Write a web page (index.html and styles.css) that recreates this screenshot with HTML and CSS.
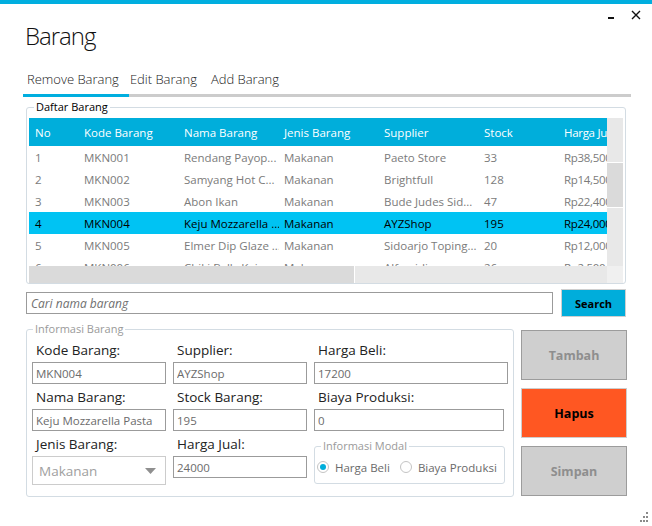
FILE: index.html
```html
<!DOCTYPE html>
<html lang="id">
<head>
<meta charset="utf-8">
<title>Barang</title>
<link rel="stylesheet" href="styles.css">
</head>
<body>
<div class="topbar"></div>
<header class="titlebar">
  <h1 class="title">Barang</h1>
  <div class="controls">
    <span class="min"></span>
    <svg class="close" width="10" height="10" viewBox="0 0 10 10"><path d="M1 1L9 9M9 1L1 9" stroke="#111" stroke-width="1.4" fill="none"/></svg>
  </div>
</header>
<nav class="tabs">
  <span class="tab">Remove Barang</span>
  <span class="tab">Edit Barang</span>
  <span class="tab">Add Barang</span>
</nav>
<div class="tabline"><div class="tabline-active"></div></div>

<fieldset class="group list">
  <legend>Daftar Barang</legend>
  <div class="grid">
    <div class="grid-main">
      <div class="viewport">
        <div class="row head"><span class="c no">No</span><span class="c">Kode Barang</span><span class="c">Nama Barang</span><span class="c">Jenis Barang</span><span class="c">Supplier</span><span class="c stock">Stock</span><span class="c price">Harga Jual</span></div>
        <div class="row"><span class="c no">1</span><span class="c">MKN001</span><span class="c">Rendang Payop...</span><span class="c">Makanan</span><span class="c">Paeto Store</span><span class="c stock">33</span><span class="c price">Rp38,500</span></div>
        <div class="row"><span class="c no">2</span><span class="c">MKN002</span><span class="c">Samyang Hot C...</span><span class="c">Makanan</span><span class="c">Brightfull</span><span class="c stock">128</span><span class="c price">Rp14,500</span></div>
        <div class="row"><span class="c no">3</span><span class="c">MKN003</span><span class="c">Abon Ikan</span><span class="c">Makanan</span><span class="c">Bude Judes Sid...</span><span class="c stock">47</span><span class="c price">Rp22,400</span></div>
        <div class="row sel"><span class="c no">4</span><span class="c">MKN004</span><span class="c">Keju Mozzarella ...</span><span class="c">Makanan</span><span class="c">AYZShop</span><span class="c stock">195</span><span class="c price">Rp24,000</span></div>
        <div class="row"><span class="c no">5</span><span class="c">MKN005</span><span class="c">Elmer Dip Glaze ...</span><span class="c">Makanan</span><span class="c">Sidoarjo Toping...</span><span class="c stock">20</span><span class="c price">Rp12,000</span></div>
        <div class="row"><span class="c no">6</span><span class="c">MKN006</span><span class="c">Chiki Balls Keju</span><span class="c">Makanan</span><span class="c">Alfamidi</span><span class="c stock">26</span><span class="c price">Rp2,500</span></div>
      </div>
      <div class="hscroll"><div class="hthumb"></div></div>
    </div>
    <div class="vbar">
      <div class="vscroll"><div class="vthumb"></div></div>
      <div class="corner"></div>
    </div>
  </div>
</fieldset>

<div class="search">
  <input class="search-input" type="text" placeholder="Cari nama barang">
  <button class="search-btn" type="button">Search</button>
</div>

<div class="bottom">
  <fieldset class="group info">
    <legend>Informasi Barang</legend>
    <div class="form">
      <div class="field"><label>Kode Barang:</label><input class="inp" type="text" value="MKN004"></div>
      <div class="field"><label>Supplier:</label><input class="inp" type="text" value="AYZShop"></div>
      <div class="field"><label>Harga Beli:</label><input class="inp" type="text" value="17200"></div>
      <div class="field"><label>Nama Barang:</label><input class="inp" type="text" value="Keju Mozzarella Pasta"></div>
      <div class="field"><label>Stock Barang:</label><input class="inp" type="text" value="195"></div>
      <div class="field"><label>Biaya Produksi:</label><input class="inp narrow" type="text" value="0"></div>
      <div class="field"><label>Jenis Barang:</label>
        <div class="combo"><span>Makanan</span><svg width="11" height="6" viewBox="0 0 11 6"><path d="M0 0H11L5.5 6Z" fill="#8f8f8f"/></svg></div>
      </div>
      <div class="field"><label>Harga Jual:</label><input class="inp" type="text" value="24000"></div>
      <fieldset class="group modal">
        <legend>Informasi Modal</legend>
        <div class="radios">
          <span class="radio"><span class="dot checked"></span>Harga Beli</span>
          <span class="radio"><span class="dot"></span>Biaya Produksi</span>
        </div>
      </fieldset>
    </div>
  </fieldset>
  <div class="actions">
    <button class="btn" type="button">Tambah</button>
    <button class="btn danger" type="button">Hapus</button>
    <button class="btn" type="button">Simpan</button>
  </div>
</div>

<svg class="grip" width="10" height="10" viewBox="0 0 10 10"><g fill="#8a8a8a"><rect x="8" y="0" width="2" height="2"/><rect x="5" y="4" width="2" height="2"/><rect x="8" y="4" width="2" height="2"/><rect x="2" y="8" width="2" height="2"/><rect x="5" y="8" width="2" height="2"/><rect x="8" y="8" width="2" height="2"/></g></svg>
</body>
</html>
```

FILE: styles.css
```css
* { box-sizing: border-box; }
html, body { margin: 0; padding: 0; background: #fff; }
body {
  font-family: "Open Sans", "Liberation Sans", sans-serif;
  color: #222;
  width: 652px;
  height: 526px;
  overflow: hidden;
  position: relative;
}

.topbar { height: 4px; background: #00AEDF; }

.titlebar {
  display: flex;
  justify-content: space-between;
  align-items: flex-start;
  padding: 0 11px 0 25px;
}
.title {
  margin: 15px 0 0;
  font-size: 24px;
  font-weight: 300;
  line-height: 34px;
  letter-spacing: -1px;
  color: #111;
}
.controls {
  display: flex;
  align-items: flex-start;
  gap: 17px;
  margin-top: 6px;
}
.min { width: 6px; height: 2px; background: #111; margin-top: 7px; }
.close { display: block; }

.tabs {
  display: flex;
  margin: 16px 0 0 27px;
  font-size: 13px;
  font-weight: 300;
  line-height: 20px;
  color: #222;
}
.tab:nth-child(1) { margin-right: 11px; }
.tab:nth-child(2) { margin-right: 14px; }
.tabline {
  margin: 5px 21px 0 23px;
  height: 3px;
  background: #CCCCCC;
}
.tabline-active { width: 106px; height: 3px; background: #00AEDF; }

.group {
  margin: 0;
  border: 1px solid #D3DCE3;
  border-radius: 3px;
  min-width: 0;
}
.group legend {
  font-size: 11px;
  line-height: 16px;
  padding: 0 2px;
}

.list {
  margin: 2px 26px 0;
  padding: 0 2px;
}
.list legend { margin-left: 5px; color: #000; }

.grid { display: flex; margin-top: 3px; height: 165px; }
.grid-main { width: 578px; display: flex; flex-direction: column; }
.viewport { height: 148px; overflow: hidden; }
.row {
  display: flex;
  align-items: center;
  height: 22px;
  white-space: nowrap;
  font-size: 11.5px;
  color: #7b7b7b;
}
.row.head { height: 28px; background: #00AEDB; color: #fff; }
.row.sel { background: #00C3F3; color: #000; }
.c { flex: none; width: 100px; padding-left: 5px; overflow: hidden; }
.c.no { width: 50px; padding-left: 6px; }
.c.stock { width: 80px; }
.c.price { letter-spacing: -0.3px; }
.hscroll { height: 17px; background: #E8E8E8; display: flex; }
.hthumb { width: 326px; background: #DADADA; border-right: 1px solid #fff; }
.vbar { width: 16px; display: flex; flex-direction: column; }
.vscroll { height: 148px; background: #E8E8E8; padding-top: 44px; }
.vthumb { height: 46px; background: #DADADA; border-top: 1px solid #fff; border-bottom: 1px solid #fff; }
.corner { height: 17px; background: #F0F0F0; }

.search {
  display: flex;
  align-items: center;
  gap: 8px;
  margin: 5px 26px 0;
  height: 28px;
}
.search-input {
  flex: 1;
  height: 22px;
  margin: 0;
  border: 1px solid #9b9b9b;
  padding: 0 4px;
  font-family: "Open Sans", sans-serif;
  font-size: 12px;
  font-style: italic;
  color: #555;
  outline: none;
}
.search-input::placeholder { color: #707070; font-style: italic; }
.search-btn {
  width: 65px;
  height: 28px;
  margin: 0;
  padding: 0;
  background: #00ADDB;
  border: 1px solid #CFCFCF;
  font-family: "Open Sans", sans-serif;
  font-size: 11px;
  font-weight: 700;
  color: #000;
}

.bottom {
  display: flex;
  align-items: flex-start;
  gap: 7px;
  margin: 4px 25px 0 26px;
}
.info {
  width: 488px;
  padding: 0 5px 11px;
}
.info legend { margin-left: 1px; color: #9a9a9a; }

.form {
  display: grid;
  grid-template-columns: 134px 134px 194px;
  column-gap: 7px;
}
.field label {
  display: block;
  font-size: 13.5px;
  line-height: 20px;
  padding: 3px 0 2px 4px;
  color: #222;
}
.inp {
  display: block;
  width: 100%;
  height: 22px;
  margin: 0;
  border: 1px solid #9b9b9b;
  padding: 0 3px;
  font-family: "Open Sans", sans-serif;
  font-size: 11.5px;
  color: #6b6b6b;
  background: #fff;
  outline: none;
}
.inp.narrow { width: 190px; }
.combo {
  height: 29px;
  border: 1px solid #CCCCCC;
  display: flex;
  align-items: center;
  justify-content: space-between;
  padding: 0 9px 0 6px;
  font-size: 13.5px;
  color: #a0a0a0;
}
.combo svg { display: block; }

.modal {
  margin-top: 7px;
  padding: 0 2px 3px;
  width: 191px;
  height: 46px;
}
.modal legend { margin-left: 4px; color: #9a9a9a; }
.radios {
  display: flex;
  align-items: center;
  gap: 10px;
  height: 26px;
  white-space: nowrap;
}
.radio {
  display: flex;
  align-items: center;
  gap: 6px;
  font-size: 11.5px;
  color: #6a6a6a;
}
.dot {
  flex: none;
  width: 12px;
  height: 12px;
  border: 1px solid #C4C4C4;
  border-radius: 50%;
  display: flex;
  align-items: center;
  justify-content: center;
}
.dot.checked::after {
  content: "";
  width: 6px;
  height: 6px;
  border-radius: 50%;
  background: #00AEDB;
}

.actions {
  display: flex;
  flex-direction: column;
  gap: 8px;
  margin-top: 9px;
  width: 106px;
}
.btn {
  height: 50px;
  margin: 0;
  padding: 0;
  border: 1px solid #9c9c9c;
  background: #CFCFCF;
  color: #8e8e8e;
  font-family: "Open Sans", sans-serif;
  font-size: 12.5px;
  font-weight: 700;
}
.btn.danger { background: #FF5722; border-color: #CDCDCD; color: #000; }

.grip { position: absolute; right: 4px; bottom: 4px; display: block; }
```
